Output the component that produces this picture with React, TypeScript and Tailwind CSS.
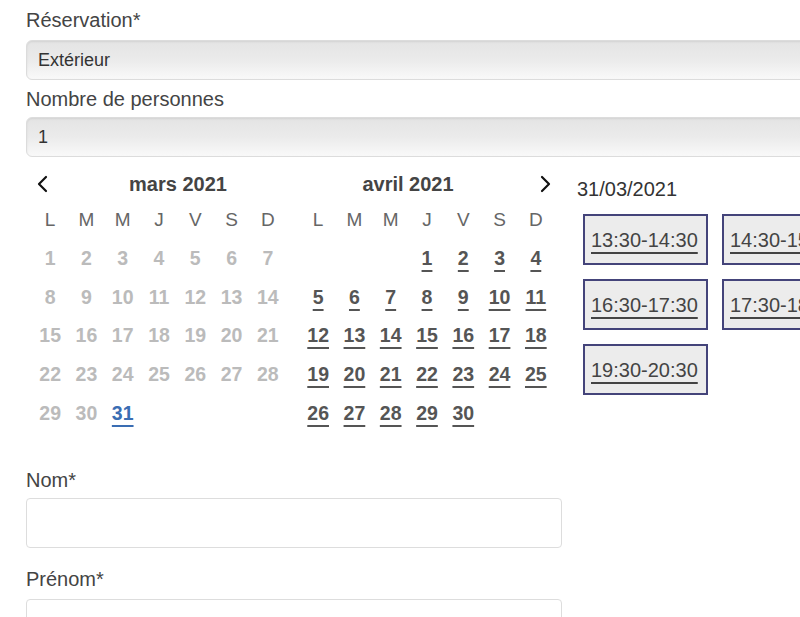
import React from 'react';

const dayNames = ['L', 'M', 'M', 'J', 'V', 'S', 'D'];

const slots = ['13:30-14:30', '14:30-15:30', '16:30-17:30', '17:30-18:30', '19:30-20:30'];

// March 2021 starts on a Monday, April 2021 on a Thursday
const marchCells: (number | null)[] = Array.from({ length: 31 }, (_, i) => i + 1);
const aprilCells: (number | null)[] = [null, null, null, ...Array.from({ length: 30 }, (_, i) => i + 1)];

const Chevron: React.FC<{ dir: 'left' | 'right' }> = ({ dir }) => (
    <svg width="12" height="18" viewBox="0 0 12 18" fill="none">
        <polyline
            points={dir === 'left' ? '10,2 3,9 10,16' : '2,2 9,9 2,16'}
            stroke="#111"
            strokeWidth="2.2"
            strokeLinecap="round"
            strokeLinejoin="round"
        />
    </svg>
);

const MonthGrid: React.FC<{ cells: (number | null)[]; month: 'mars' | 'avril' }> = ({ cells, month }) => (
    <div className="grid grid-cols-7 w-[254px]">
        {dayNames.map((d, i) => (
            <div key={i} className="h-[38px] flex items-center justify-center text-[19px] text-[#666]">
                {d}
            </div>
        ))}
        {cells.map((n, i) => {
            if (n === null) return <div key={i} className="h-[38.75px]" />;
            let cls = 'text-[#bbb]';
            if (month === 'avril') cls = 'text-[#555] underline underline-offset-[5px] decoration-2';
            if (month === 'mars' && n === 31) cls = 'text-[#3a6db3] underline underline-offset-[5px] decoration-2';
            return (
                <div key={i} className="h-[38.75px] flex items-center justify-center">
                    <span className={`text-[19.5px] font-bold ${cls}`}>{n}</span>
                </div>
            );
        })}
    </div>
);

const SelectBox: React.FC<{ value: string }> = ({ value }) => (
    <div className="h-[40px] w-[790px] rounded-l-[6px] border border-[#dcdcdc] bg-linear-to-b from-[#e4e4e4] via-[#ebebeb] to-[#f9f9f9] shadow-[inset_0_1px_2px_rgba(0,0,0,0.08)] flex items-center pl-[11px] text-[18px] text-[#333]">
        {value}
    </div>
);

const App: React.FC = () => {
    return (
        <div className="w-[800px] h-[617px] overflow-hidden bg-white font-['Liberation_Sans',Arial,sans-serif] text-[#444]">
            <div className="pl-[26px] pt-[9px]">
                <div className="h-[22px] leading-[22px] text-[20px] mb-[9px]">Réservation*</div>
                <SelectBox value="Extérieur" />
                <div className="h-[22px] leading-[22px] text-[20px] mt-[8px] mb-[7px]">Nombre de personnes</div>
                <SelectBox value="1" />
            </div>

            <div className="flex mt-[9px] pl-[32px]">
                <div className="flex flex-col">
                    <div className="flex h-[35px] items-center">
                        <div className="w-[20px] flex justify-center"><Chevron dir="left" /></div>
                        <div className="w-[252px] text-center text-[20px] font-bold text-[#444]">mars 2021</div>
                        <div className="w-[208px] text-center text-[20px] font-bold text-[#444]">avril 2021</div>
                        <div className="w-[42px] flex justify-end pr-[2px]"><Chevron dir="right" /></div>
                    </div>
                    <div className="flex gap-[14px]">
                        <MonthGrid cells={marchCells} month="mars" />
                        <MonthGrid cells={aprilCells} month="avril" />
                    </div>
                </div>

                <div className="ml-[23px] pt-[12px] flex flex-col">
                    <div className="h-[22px] leading-[22px] text-[20px] text-[#333]">31/03/2021</div>
                    <div className="ml-[6px] mt-[14px] grid grid-cols-[125px_125px] gap-[14px]">
                        {slots.map((s) => (
                            <div
                                key={s}
                                className="h-[51px] w-[125px] border-2 border-[#44447a] bg-[#ececec] flex items-center pl-[6px] whitespace-nowrap overflow-hidden"
                            >
                                <span className="text-[20px] text-[#444] underline underline-offset-[5px] decoration-[1.5px]">{s}</span>
                            </div>
                        ))}
                    </div>
                </div>
            </div>

            <div className="pl-[26px] mt-[36px]">
                <div className="h-[22px] leading-[22px] text-[20px] mb-[7px]">Nom*</div>
                <div className="h-[50px] w-[536px] rounded-[4px] border border-[#dddddd]" />
                <div className="h-[22px] leading-[22px] text-[20px] mt-[20px] mb-[9px]">Prénom*</div>
                <div className="h-[50px] w-[536px] rounded-[4px] border border-[#dddddd]" />
            </div>
        </div>
    );
};

export default App;
